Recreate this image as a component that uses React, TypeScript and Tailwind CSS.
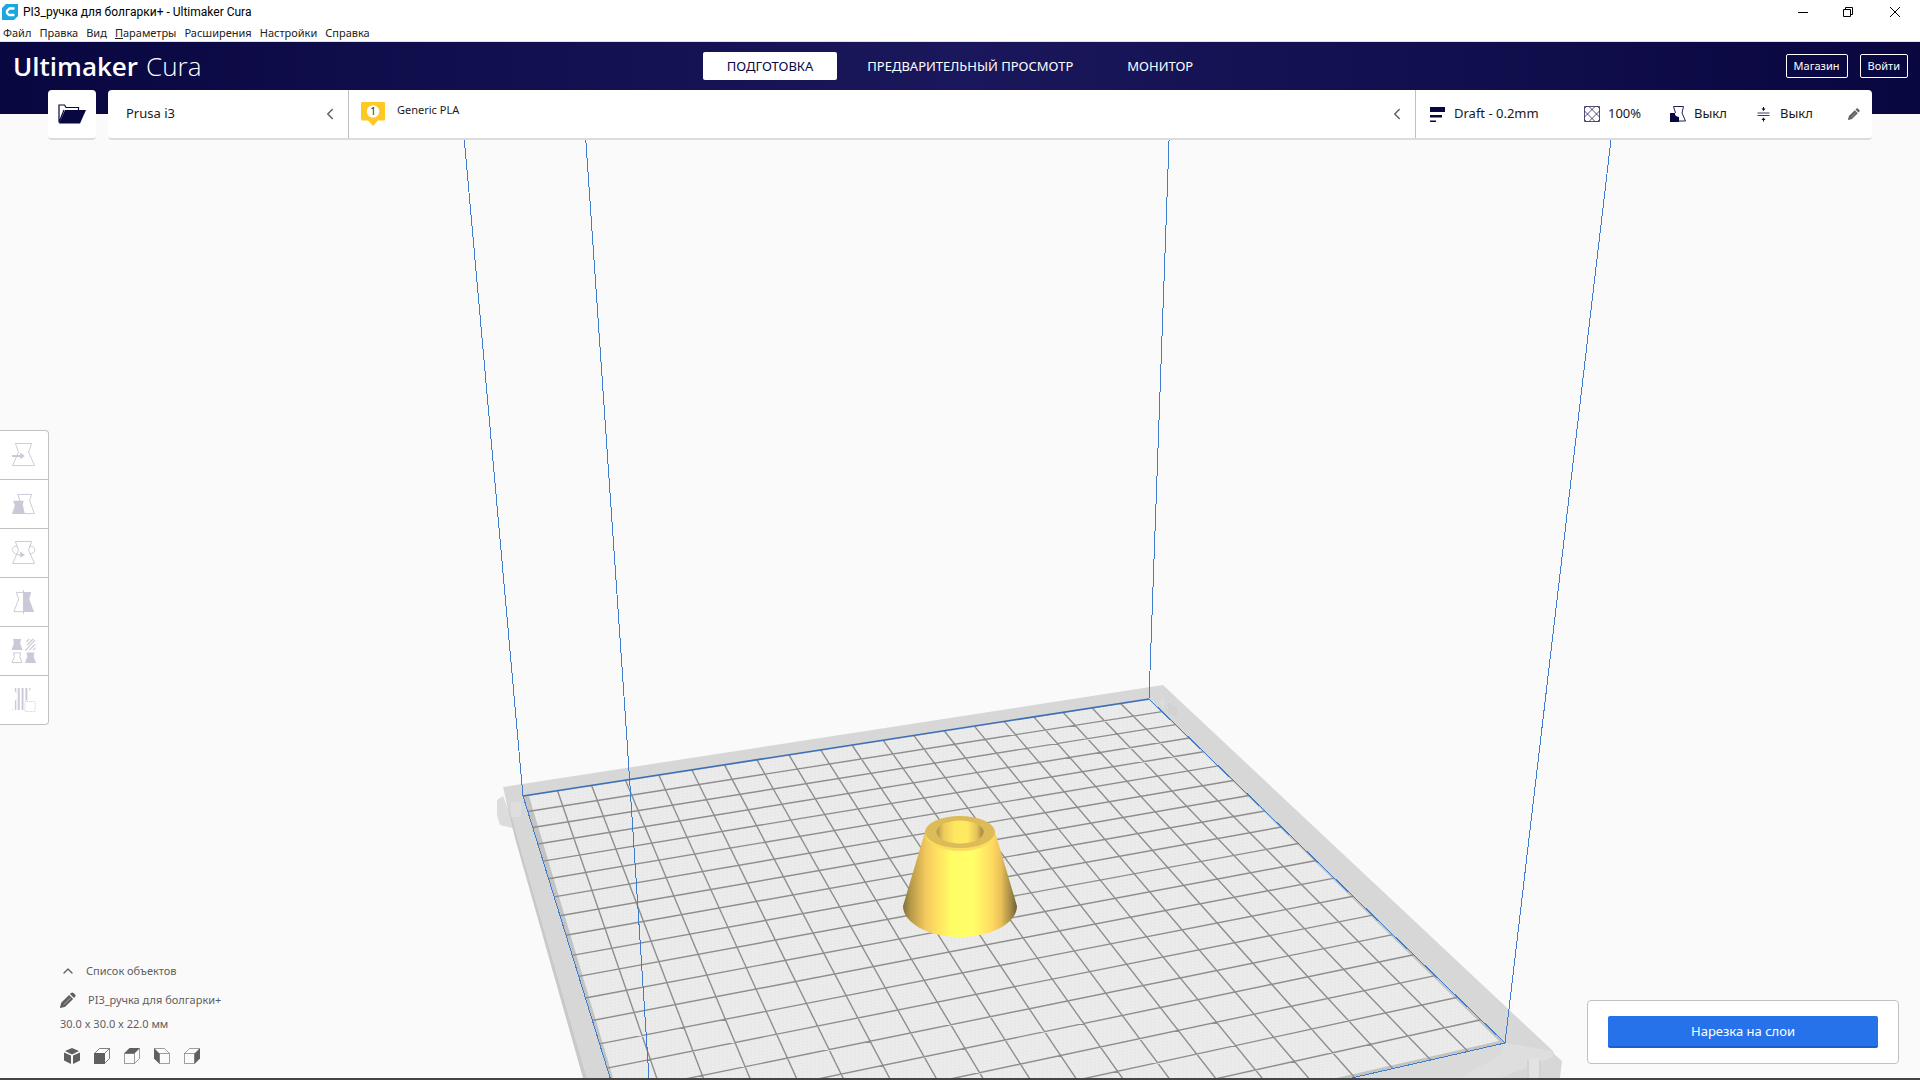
import React from 'react';
import { ChevronLeft, ChevronUp } from 'lucide-react';

type Point = [number, number];

const menus = ['Файл', 'Правка', 'Вид', 'Параметры', 'Расширения', 'Настройки', 'Справка'];

// corners of the build plate on the canvas: back left, back right, front right, front left
const plate: Point[] = [[523, 796], [1149, 699], [1505, 1043], [659, 1236]];

const CELLS = 20;

// maps plate coordinates (0..1) to the perspective view
const project = (u: number, v: number): Point => {
  const [[x0, y0], [x1, y1], [x2, y2], [x3, y3]] = plate;
  const dx1 = x1 - x2, dx2 = x3 - x2, sx = x0 - x1 + x2 - x3;
  const dy1 = y1 - y2, dy2 = y3 - y2, sy = y0 - y1 + y2 - y3;
  const det = dx1 * dy2 - dx2 * dy1;
  const g = (sx * dy2 - dx2 * sy) / det;
  const h = (dx1 * sy - sx * dy1) / det;
  const w = g * u + h * v + 1;
  return [
    ((x1 - x0 + g * x1) * u + (x3 - x0 + h * x3) * v + x0) / w,
    ((y1 - y0 + g * y1) * u + (y3 - y0 + h * y3) * v + y0) / w,
  ];
};

const segment = (a: Point, b: Point) =>
  `M${a[0].toFixed(1)} ${a[1].toFixed(1)}L${b[0].toFixed(1)} ${b[1].toFixed(1)}`;

const gridPath = Array.from({ length: CELLS - 1 }, (_, i) => {
  const t = (i + 1) / CELLS;
  return segment(project(t, 0), project(t, 1)) + segment(project(0, t), project(1, t));
}).join('');

const Scene = () => (
  <svg
    className="absolute inset-0 h-full w-full"
    viewBox="0 114 1920 964"
    preserveAspectRatio="xMidYMax slice"
    aria-hidden="true"
  >
    <defs>
      <linearGradient id="side" x1="0" x2="1" y1="0" y2="0">
        <stop offset="0" stopColor="#80703a" />
        <stop offset="0.07" stopColor="#b99a49" />
        <stop offset="0.2" stopColor="#f3c95d" />
        <stop offset="0.3" stopColor="#ffe060" />
        <stop offset="0.42" stopColor="#fffd64" />
        <stop offset="0.62" stopColor="#ffff68" />
        <stop offset="0.78" stopColor="#ffdb60" />
        <stop offset="0.86" stopColor="#eac05a" />
        <stop offset="0.95" stopColor="#9f8743" />
        <stop offset="1" stopColor="#6d6136" />
      </linearGradient>
      <linearGradient id="hole" x1="0" x2="1" y1="0" y2="0">
        <stop offset="0" stopColor="#b09346" />
        <stop offset="0.15" stopColor="#edc95b" />
        <stop offset="0.4" stopColor="#ffe861" />
        <stop offset="0.65" stopColor="#ffea62" />
        <stop offset="0.85" stopColor="#e8c458" />
        <stop offset="1" stopColor="#9c8341" />
      </linearGradient>
      <pattern id="weave" width="4" height="3" patternUnits="userSpaceOnUse" patternTransform="skewY(-9)">
        <rect width="4" height="3" fill="#e9e9e9" />
        <rect width="2" height="1" fill="#f0f0f0" />
      </pattern>
    </defs>

    {/* frame */}
    <path d="M503 796L497 800L497 815L500 825L516 829Z" fill="#dcdcdc" />
    <path d="M503 787L1163 685L1553 1051L1554 1054L1562 1061L1560 1078L587 1078Z" fill="#d7d7d7" />
    <path d="M503 787L587 1078L583 1078L515 838Z" fill="#c9c9c9" />
    <path d="M1505 1043L1553 1051L1553 1057L1500 1078L1353 1078Z" fill="#dedede" />
    <path d="M511 802h10v15h-10z" fill="#dedede" />
    <path d="M1159 702l5-4v12z" fill="#dddddd" />
    <path d="M1168 703l9 4v10l-9 -4z" fill="#d2d2d2" />
    <path d="M1327 1078L1505 1043L1500 1055L1460 1078Z" fill="#dadada" />
    <path d="M1527 1060q7 -4 14 0v18h-14z" fill="#e2e2e2" />
    <path d="M1527 1060h2v18h-2zM1539 1060h2v18h-2z" fill="#d2d2d2" />

    {/* plate */}
    <path d="M523 796L1149 699L1505 1043L659 1236Z" fill="#c3c3c3" />
    <path d="M529 796L1149 700L1499 1041L659 1232Z" fill="url(#weave)" />
    <path d={gridPath} fill="none" stroke="#8e8e8e" strokeWidth="1.4" />

    <g fill="none" stroke="#3f7dcc" strokeWidth="1" shapeRendering="crispEdges">
      <path d="M659 1236L523 796L462 114" />
      <path d="M649 1078L627 740L584 114" />
      <path d="M1149 699L1170 114" />
      <path d="M1505 1043L1614 114" />
      <path d="M659 1236L1505 1043L1149 699" />
    </g>
    <path d="M523 796L1149 699" fill="none" stroke="#3d6fb8" strokeWidth="1.6" />

    {/* model */}
    <path d="M925 832L903 906A57 31 0 0 0 1017 906L995 832Z" fill="url(#side)" />
    <ellipse cx="960" cy="834" rx="35" ry="17" fill="#fadd5e" />
    <ellipse cx="960" cy="832" rx="35" ry="16" fill="#dcbb58" />
    <ellipse cx="960" cy="832" rx="23.5" ry="11.5" fill="url(#hole)" />
  </svg>
);

const outline = 'M3.5 .5H20.5L17.3 9.5L23.5 23.5H.7L6.7 9.5Z';

const tools = [
  {
    label: 'Переместить',
    icon: (
      <>
        <path d={outline} fill="none" stroke="currentColor" />
        <path d="M0 12.500h8.500v-2.500l5 3.500l-5 3.500v-2.500H0z" fill="currentColor" />
      </>
    ),
  },
  {
    label: 'Масштабировать',
    icon: (
      <>
        <path d="M8 8L6 2.500H20.500L18.300 9L23.300 22.500H13M7.500 7.500L12 17" fill="none" stroke="currentColor" />
        <path d="M1.500 9H12v1.500L11 14L13.500 23H0L3 14L1.500 10.500z" fill="currentColor" />
      </>
    ),
  },
  {
    label: 'Повернуть',
    icon: (
      <>
        <path d={outline} fill="none" stroke="currentColor" />
        <path d="M6 5.500C2 5-.5 7 .500 10C1.500 13 5 14.500 9 14.500M18 5.500C22 5 24.500 7.500 23.500 10.500C23 12 21 13.500 18.500 13.500" fill="none" stroke="currentColor" />
        <path d="M8.500 11l5 3.500l-5 3z" fill="currentColor" />
      </>
    ),
  },
  {
    label: 'Отразить',
    icon: (
      <>
        <path d="M12 2.500H4.500L7 9.500L2 22.500H12M12 0V25" fill="none" stroke="currentColor" />
        <path d="M12 2H20L18 9.500L23 23H12z" fill="currentColor" />
      </>
    ),
  },
  {
    label: 'Настройки модели',
    icon: (
      <>
        <path d="M1 0H9.500L8.500 4.500L11 11.500H-.5L2 4.500zM15 14H23.500L22.500 18L25 25H13.500L16 18z" fill="currentColor" />
        <path d="M1.500 14.500H9L8 18.500L10.500 24.500H0L2.500 18.500z" fill="none" stroke="currentColor" />
        <path d="M15 3l3-3M16 6l6-6M14 12L24 1M18 11.500L24 5.500M22 11.500l2.500-2.500" fill="none" stroke="currentColor" strokeWidth="1.2" />
      </>
    ),
  },
  {
    label: 'Блокировка поддержки',
    icon: (
      <>
        <path d="M3 0h1.500v6L3 3zM3 14l1.500-3v12H3zM6 0h2v23H6zM10 0h2v23h-2zM14 0h2v13h-2zM18 0h1.500l-1.500 4z" fill="currentColor" />
        <path d="M0 22.500h2M13.500 14h10.500v10.500H13.500z" fill="none" stroke="currentColor" strokeDasharray="1 1" />
      </>
    ),
  },
];

const views = [
  {
    label: '3D вид',
    icon: <path d="M8 0L15 3L8 6.500L1 3zM0 4.500L7 7.500V16L0 12.500zM16 4.500L9 7.500V16L16 12.500z" fill="currentColor" />,
  },
  {
    label: 'Вид спереди',
    icon: (
      <>
        <path d="M.5 5.500L5.500 .5H15.500V10.500L10.500 15.500M10.500 5.500L15.500 .5" fill="none" stroke="currentColor" strokeWidth="0.8" />
        <path d="M0 5h11v11H0z" fill="currentColor" />
      </>
    ),
  },
  {
    label: 'Вид сверху',
    icon: (
      <>
        <path d="M.5 5.500H10.500V15.500H.5zM10.500 15.500L15.500 10.500V.5" fill="none" stroke="currentColor" strokeWidth="0.6" />
        <path d="M0 5.500L5.500 0H16L10.500 5.500z" fill="currentColor" />
      </>
    ),
  },
  {
    label: 'Вид слева',
    icon: (
      <>
        <path d="M5.500 5.500H15.500V15.500H5.500zM.5 .5H10.500L15.500 5.500" fill="none" stroke="currentColor" strokeWidth="0.6" />
        <path d="M0 0L5.500 5.500V16L0 10.500z" fill="currentColor" />
      </>
    ),
  },
  {
    label: 'Вид справа',
    icon: (
      <>
        <path d="M.5 5.500H10.500V15.500H.5zM.5 5.500L5.500 .5H15.500" fill="none" stroke="currentColor" strokeWidth="0.6" />
        <path d="M16 0L10.500 5.500V16L16 10.500z" fill="currentColor" />
      </>
    ),
  },
];

const Pencil = ({ className }: { className?: string }) => (
  <svg viewBox="0 0 16 16" className={className} fill="currentColor" aria-hidden="true">
    <path d="M10.800 1.200Q12.200 -.2 13.500 1L15 2.500Q16.200 3.800 14.900 5.100L14 6L9.900 2.100zM9.100 2.900L13.100 6.900L5.200 14.800L.5 16Q0 16 0 15.500L1.200 10.800z" />
    <path d="M4 12.500L10.500 6" stroke="#fafafa" strokeWidth="0.5" />
  </svg>
);

const settings = [
  {
    text: 'Draft - 0.2mm',
    width: 'w-[154px]',
    icon: <path d="M0 1h15v5H0zM0 9h12v2.500H0zM0 14.500h6v1.500H0z" fill="currentColor" />,
  },
  {
    text: '100%',
    width: 'w-[86px]',
    icon: (
      <path
        d="M.5 .5h15v15H.5zM5 .5L15.500 11M.5 5L11 15.500M11 .5L.5 11M15.500 5L5 15.500M.5 2.500L2.500 .5M13.500 .5L15.500 2.500M.5 13.500L2.500 15.500M13.500 15.500L15.500 13.500"
        fill="none"
        stroke="currentColor"
        strokeWidth="0.7"
      />
    ),
  },
  {
    text: 'Выкл',
    width: 'w-[86px]',
    icon: (
      <>
        <path d="M3.500 .5H13.500L12 7L15.500 15H9M3.500 .5L5.500 7" fill="none" stroke="currentColor" strokeWidth="0.9" />
        <path d="M0 7H5Q4.500 10.500 9 11V16H0z" fill="currentColor" />
      </>
    ),
  },
  {
    text: 'Выкл',
    width: 'w-[92px]',
    icon: (
      <>
        <path d="M1.500 7h12M1.500 9.500h12" stroke="currentColor" strokeWidth="0.8" />
        <path d="M7 1h1v1.500h1.500L7.500 5L5.500 2.500H7zM7 15.500h1V14h1.500L7.500 11.500L5.500 14H7z" fill="currentColor" />
      </>
    ),
  },
];

const TitleBar = () => (
  <div className="flex h-6 items-center bg-white pl-0.5 text-black">
    <svg viewBox="0 0 16 16" className="h-4 w-4" aria-hidden="true">
      <path d="M4 0H16V12L12 16H0V4z" fill="#18a7df" />
      <path d="M12.500 4.500H7.500L5 7V9L7 11H12.500" fill="none" stroke="#fff" strokeWidth="2.4" />
    </svg>
    <h1 className="ml-[5px] font-['Roboto',sans-serif] text-xs">PI3_ручка для болгарки+ - Ultimaker Cura</h1>
    <div className="ml-auto flex items-center">
      <button aria-label="Свернуть" className="flex h-5 w-[45px] items-center justify-center">
        <svg viewBox="0 0 10 10" className="h-2.5 w-2.5"><path d="M0 5.500h10" stroke="#000" /></svg>
      </button>
      <button aria-label="Восстановить" className="flex h-5 w-[45px] items-center justify-center">
        <svg viewBox="0 0 10 10" className="h-2.5 w-2.5" fill="none" stroke="#000">
          <path d="M.5 2.500h7v7h-7zM2.500 2.500v-2h7v7h-2" />
        </svg>
      </button>
      <button aria-label="Закрыть" className="flex h-5 w-[50px] items-center justify-center">
        <svg viewBox="0 0 10 10" className="h-2.5 w-2.5"><path d="M0 0L10 10M10 0L0 10" stroke="#000" /></svg>
      </button>
    </div>
  </div>
);

const Header = () => (
  <header className="h-[72px] bg-linear-to-r from-[#090740] via-[#1a175c] to-[#090740]">
    <div className="grid h-12 grid-cols-[1fr_auto_1fr] items-center px-3 text-white">
      <div className="flex items-baseline gap-2 pl-px font-['Open_Sans',sans-serif] text-[26px] leading-8">
        <span className="font-semibold">Ultimaker</span>
        <span className="font-light">Cura</span>
      </div>
      <nav className="flex gap-1.5 text-[13px]">
        <button className="h-7 rounded-xs bg-white px-6 pt-px text-[#0a0842]">ПОДГОТОВКА</button>
        <button className="h-7 px-6 pt-px">ПРЕДВАРИТЕЛЬНЫЙ ПРОСМОТР</button>
        <button className="h-7 px-6 pt-px">МОНИТОР</button>
      </nav>
      <div className="flex justify-end gap-3 text-[11px]">
        <button className="h-6 rounded-xs border border-white px-[7px]">Магазин</button>
        <button className="h-6 rounded-xs border border-white px-[7px]">Войти</button>
      </div>
    </div>
  </header>
);

const Toolbar = () => (
  <div className="relative -mt-6 flex gap-3 px-12 text-[13px] text-[#191919]">
    <button aria-label="Открыть файл" className="flex h-[50px] w-12 items-center justify-center rounded-sm border-b-2 border-[#dcdcdc] bg-white">
      <svg viewBox="0 0 28 20" className="h-5 w-7 text-[#090740]">
        <path d="M1 18.500V1H6.500L8 3.500H20.500V6M1 18.500L6 6" fill="none" stroke="currentColor" strokeWidth="1.2" />
        <path d="M7 6H28L22 19.500H1z" fill="currentColor" />
      </svg>
    </button>
    <div className="flex h-[50px] flex-1 rounded-sm border-b-2 border-[#dcdcdc] bg-white">
      <button className="flex w-[241px] items-center justify-between border-r border-[#c0c0c0] pr-[9px] pl-[18px]">
        Prusa i3
        <ChevronLeft className="h-[18px] w-[18px] text-[#606060]" />
      </button>
      <button className="flex flex-1 items-center justify-between border-r border-[#c0c0c0] pr-[9px] pl-3">
        <span className="flex items-start gap-3">
          <svg viewBox="0 0 24 24" className="h-6 w-6">
            <path d="M1 0H23Q24 0 24 1V17Q24 18.500 23 18.500H17L12 24L7 18.500H1Q0 18.500 0 17V1Q0 0 1 0" fill="#ffc924" />
            <circle cx="12" cy="9.500" r="6.200" fill="#fff" />
            <text x="12" y="13" textAnchor="middle" fontSize="10" fill="#191919">1</text>
          </svg>
          <span className="text-[11px]">Generic PLA</span>
        </span>
        <ChevronLeft className="h-[18px] w-[18px] text-[#606060]" />
      </button>
      <button className="flex items-center pr-3 pl-3.5">
        {settings.map((item, i) => (
          <span key={i} className={`flex items-center gap-2 ${item.width}`}>
            <svg viewBox="0 0 16 16" className="h-4 w-4 text-[#090740]">{item.icon}</svg>
            {item.text}
          </span>
        ))}
        <Pencil className="h-3 w-3 text-[#606060]" />
      </button>
    </div>
  </div>
);

const ToolPanel = () => (
  <aside className="relative mt-[290px] w-[49px] divide-y divide-[#c0c1c4] self-start rounded-r border border-l-0 border-[#c0c1c4] bg-white">
    {tools.map((tool) => (
      <div key={tool.label}>
        <button aria-label={tool.label} className="flex h-12 w-full items-center pl-3">
          <svg viewBox="0 0 25 25" className="h-6 w-6 text-[#cac9d8]" overflow="visible">{tool.icon}</svg>
        </button>
      </div>
    ))}
  </aside>
);

const ObjectInfo = () => (
  <div className="ml-[60px] text-[11px] text-[#5f5f5f]">
    <button className="flex h-6 items-center gap-2.5">
      <ChevronUp className="h-4 w-4" />
      Список объектов
    </button>
    <div className="mt-[5px] flex h-6 items-center gap-3">
      <Pencil className="h-4 w-4" />
      PI3_ручка для болгарки+
    </div>
    <p className="h-6 leading-6">30.0 x 30.0 x 22.0 мм</p>
    <div className="mt-3 mb-3.5 ml-1 flex gap-3.5">
      {views.map((view) => (
        <button key={view.label} aria-label={view.label}>
          <svg viewBox="0 0 16 16" className="h-4 w-4">{view.icon}</svg>
        </button>
      ))}
    </div>
  </div>
);

const App = () => {
  return (
    <div className="flex min-h-screen flex-col bg-[#fafafa] font-['Noto_Sans',sans-serif]">
      <TitleBar />
      <nav className="flex h-[18px] items-start gap-2 border-b border-[#dfe0ea] bg-white pl-[3px] text-[11px] leading-[18px] text-[#222]">
        {menus.map((menu) => (
          <button key={menu}>
            {menu === 'Параметры' ? <><u>П</u>араметры</> : menu}
          </button>
        ))}
      </nav>
      <Header />
      <main className="relative flex flex-1 flex-col">
        <Scene />
        <Toolbar />
        <ToolPanel />
        <div className="relative mt-auto flex items-end justify-between">
          <ObjectInfo />
          <div className="mr-[21px] mb-3.5 rounded-sm border border-[#c0c1c4] bg-white px-5 py-[15px]">
            <button className="h-8 w-[270px] rounded-xs border-b-2 border-[#1d5fca] bg-[#2672ea] pt-px text-[13px] text-white">
              Нарезка на слои
            </button>
          </div>
        </div>
      </main>
      <div className="h-0.5 bg-[#444]" />
    </div>
  );
};

export default App;
